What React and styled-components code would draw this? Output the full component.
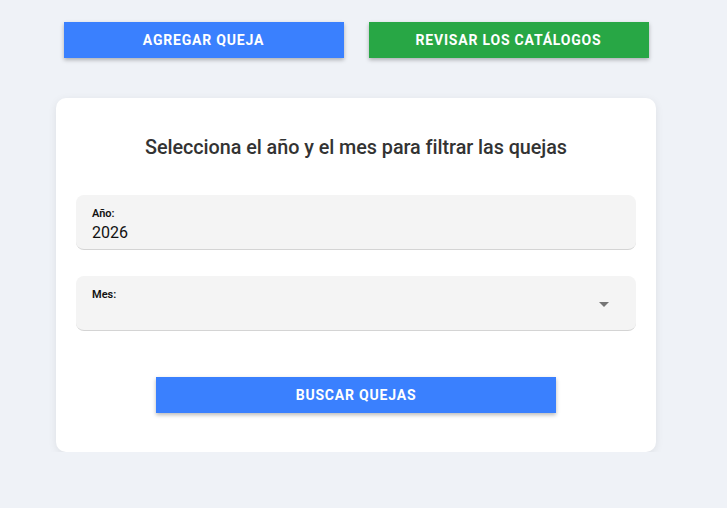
import styled, { createGlobalStyle } from "styled-components";

const GlobalStyle = createGlobalStyle`
  html, body {
    margin: 0;
    padding: 0;
    background-color: #eff2f7;
    font-family: Roboto, "Liberation Sans", sans-serif;
  }
`;

const Page = styled.div`
  width: 600px;
  margin-left: 56px;
  padding-top: 22px;
`;

const TopActions = styled.div`
  display: flex;
  justify-content: center;
  gap: 25px;
  margin-bottom: 40px;
`;

const ActionButton = styled.button`
  width: ${(p) => p.$width || "280px"};
  height: 36px;
  border: none;
  border-radius: 0;
  background-color: ${(p) => p.$color || "#3a80fe"};
  color: #fff;
  font-family: Roboto, "Liberation Sans", sans-serif;
  font-size: 14px;
  font-weight: 700;
  letter-spacing: 0.8px;
  text-transform: uppercase;
  box-shadow: 0 2px 4px rgba(0, 0, 0, 0.28);
  cursor: pointer;
`;

const Card = styled.section`
  background-color: #fff;
  border-radius: 10px;
  box-shadow: 0 2px 8px rgba(0, 0, 0, 0.08);
  padding: 36px 20px 39px;
  display: flex;
  flex-direction: column;
`;

const Title = styled.h2`
  margin: 0 0 33px;
  font-size: 19.8px;
  line-height: 28px;
  font-weight: 500;
  letter-spacing: -0.05px;
  color: #333;
  text-align: center;
`;

const Field = styled.label`
  position: relative;
  display: flex;
  flex-direction: column;
  height: 55px;
  box-sizing: border-box;
  padding: 12px 16px 0;
  margin-bottom: ${(p) => p.$gap || "26px"};
  background-color: #f4f4f4;
  border-radius: 8px;
  border-bottom: 1px solid #d4d4d4;
`;

const FieldLabel = styled.span`
  font-size: 11px;
  line-height: 14px;
  font-weight: 600;
  color: #111;
`;

const FieldValue = styled.span`
  font-size: 16px;
  line-height: 20px;
  color: #111;
  margin-top: 2px;
`;

const Arrow = styled.span`
  position: absolute;
  right: 27px;
  top: 26px;
  width: 0;
  height: 0;
  border-left: 5px solid transparent;
  border-right: 5px solid transparent;
  border-top: 5px solid #757575;
`;

const SubmitRow = styled.div`
  display: flex;
  justify-content: center;
`;

export default function App() {
  return (
    <>
      <GlobalStyle />
      <Page>
        <TopActions>
          <ActionButton>Agregar queja</ActionButton>
          <ActionButton $color="#28a745">Revisar los catálogos</ActionButton>
        </TopActions>
        <Card>
          <Title>Selecciona el año y el mes para filtrar las quejas</Title>
          <Field>
            <FieldLabel>Año:</FieldLabel>
            <FieldValue>2026</FieldValue>
          </Field>
          <Field $gap="46px">
            <FieldLabel>Mes:</FieldLabel>
            <FieldValue></FieldValue>
            <Arrow />
          </Field>
          <SubmitRow>
            <ActionButton $width="400px">Buscar quejas</ActionButton>
          </SubmitRow>
        </Card>
      </Page>
    </>
  );
}
